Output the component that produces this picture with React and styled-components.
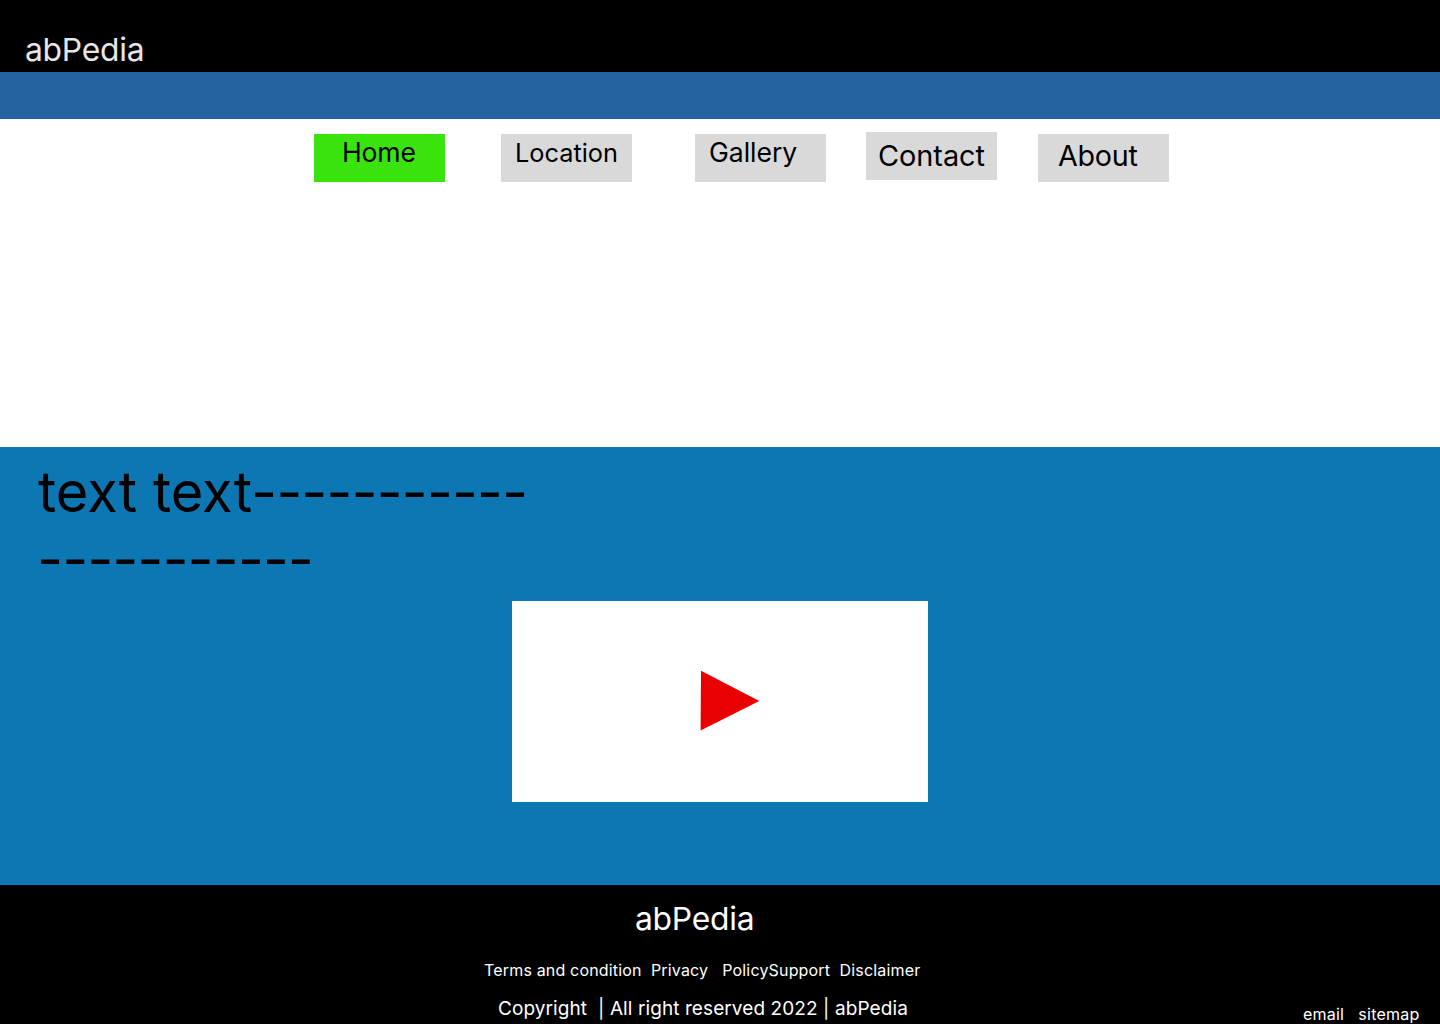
import React from "react";
import styled, { createGlobalStyle } from "styled-components";

const GlobalStyle = createGlobalStyle`
  * { box-sizing: border-box; }
  body { margin: 0; background: #fff; font-family: Inter, "Liberation Sans", sans-serif; }
`;
const Page = styled.div`
  width: 1440px;
  height: 1024px;
  display: flex;
  flex-direction: column;
  overflow: hidden;
`;
const Header = styled.header`
  height: 72px;
  padding: 30px 25px 0;
  background: #000;
`;
const Brand = styled.div`
  font-size: 31.8px;
  line-height: 39px;
  letter-spacing: -0.24px;
  color: ${(p) => p.$color || "#fff"};
  white-space: pre;
`;
const Band = styled.div`
  height: 47px;
  background: #2463a0;
`;
const Nav = styled.nav`
  height: 328px;
  padding: 13px 0 0 314px;
  display: flex;
  align-items: flex-start;
`;
const NavItem = styled.a`
  width: 131px;
  height: 48px;
  margin: ${(p) => p.$top}px ${(p) => p.$gap}px 0 0;
  padding: ${(p) => p.$py}px 0 0 ${(p) => p.$px}px;
  background: ${(p) => (p.$active ? "#39e40e" : "#d9d9d9")};
  color: #000;
  font-size: ${(p) => p.$size}px;
  letter-spacing: ${(p) => p.$ls}px;
  line-height: 34px;
  white-space: nowrap;
`;
const Main = styled.main`
  height: 438px;
  padding: 12px 38px 0;
  background: #0d77b4;
`;
const Copy = styled.p`
  width: 520px;
  height: 134px;
  margin: 0 0 8px;
  font-size: 56px;
  line-height: 67px;
  white-space: nowrap;
  color: #000;
`;
const Dashes = styled.span`
  margin-left: -0.7px;
  letter-spacing: -0.68px;
`;
const Video = styled.div`
  width: 416px;
  height: 201px;
  margin: 0 auto;
  padding: 69px 0 0 188px;
  background: #fff;
`;
const Footer = styled.footer`
  height: 139px;
  padding-top: 14px;
  background: #000;
  color: #fff;
`;
const FooterBrand = styled(Brand)`
  margin-left: 635px;
`;
const Row = styled.div`
  display: flex;
  height: ${(p) => p.$h}px;
  margin: ${(p) => p.$top || 0}px 0 0 ${(p) => p.$left}px;
  font-size: ${(p) => p.$size}px;
  letter-spacing: ${(p) => p.$ls}px;
  line-height: ${(p) => p.$h}px;
  white-space: pre;
`;
const Bottom = styled.div`
  display: flex;
  align-items: flex-start;
  justify-content: space-between;
  margin-top: 14px;
  padding-right: 20.5px;
`;
const NAV = [
  { label: "Home", top: 2, gap: 56, px: 28, py: 1, size: 26.6, ls: -0.2, active: true },
  { label: "Location", top: 2, gap: 63, px: 14, py: 2, size: 25.3, ls: 0 },
  { label: "Gallery", top: 2, gap: 40, px: 14, py: 1, size: 26.6, ls: -0.05 },
  { label: "Contact", top: 0, gap: 41, px: 12, py: 7, size: 28.9, ls: -0.05 },
  { label: "About", top: 2, gap: 0, px: 20, py: 5, size: 28.7, ls: -0.25 },
];

export default function App() {
  return (
    <Page>
      <GlobalStyle />
      <Header><Brand $color="#e6e6e6">abPedia</Brand></Header>
      <Band />
      <Nav>
        {NAV.map((n) => (
          <NavItem key={n.label} $top={n.top} $gap={n.gap} $px={n.px} $py={n.py} $size={n.size} $ls={n.ls} $active={n.active}>
            {n.label}
          </NavItem>
        ))}
      </Nav>
      <Main>
        <Copy>text text<Dashes>-----------</Dashes><br /><Dashes>-----------</Dashes></Copy>
        <Video>
          <svg width="60" height="62" viewBox="0 0 60 62"><path d="M1 .8L59.3 31L.6 60.4Z" fill="#e90000" /></svg>
        </Video>
      </Main>
      <Footer>
        <FooterBrand>abPedia</FooterBrand>
        <Row $top={22} $left={484} $h={20} $size={16} $ls={0.17}>{"Terms and condition  Privacy   PolicySupport  Disclaimer"}</Row>
        <Bottom>
          <Row $left={498} $h={30} $size={19} $ls={0.09}>{"Copyright  | All right reserved 2022 | abPedia"}</Row>
          <Row $top={10} $left={0} $h={20} $size={16} $ls={0.23}>{"email   sitemap"}</Row>
        </Bottom>
      </Footer>
    </Page>
  );
}
